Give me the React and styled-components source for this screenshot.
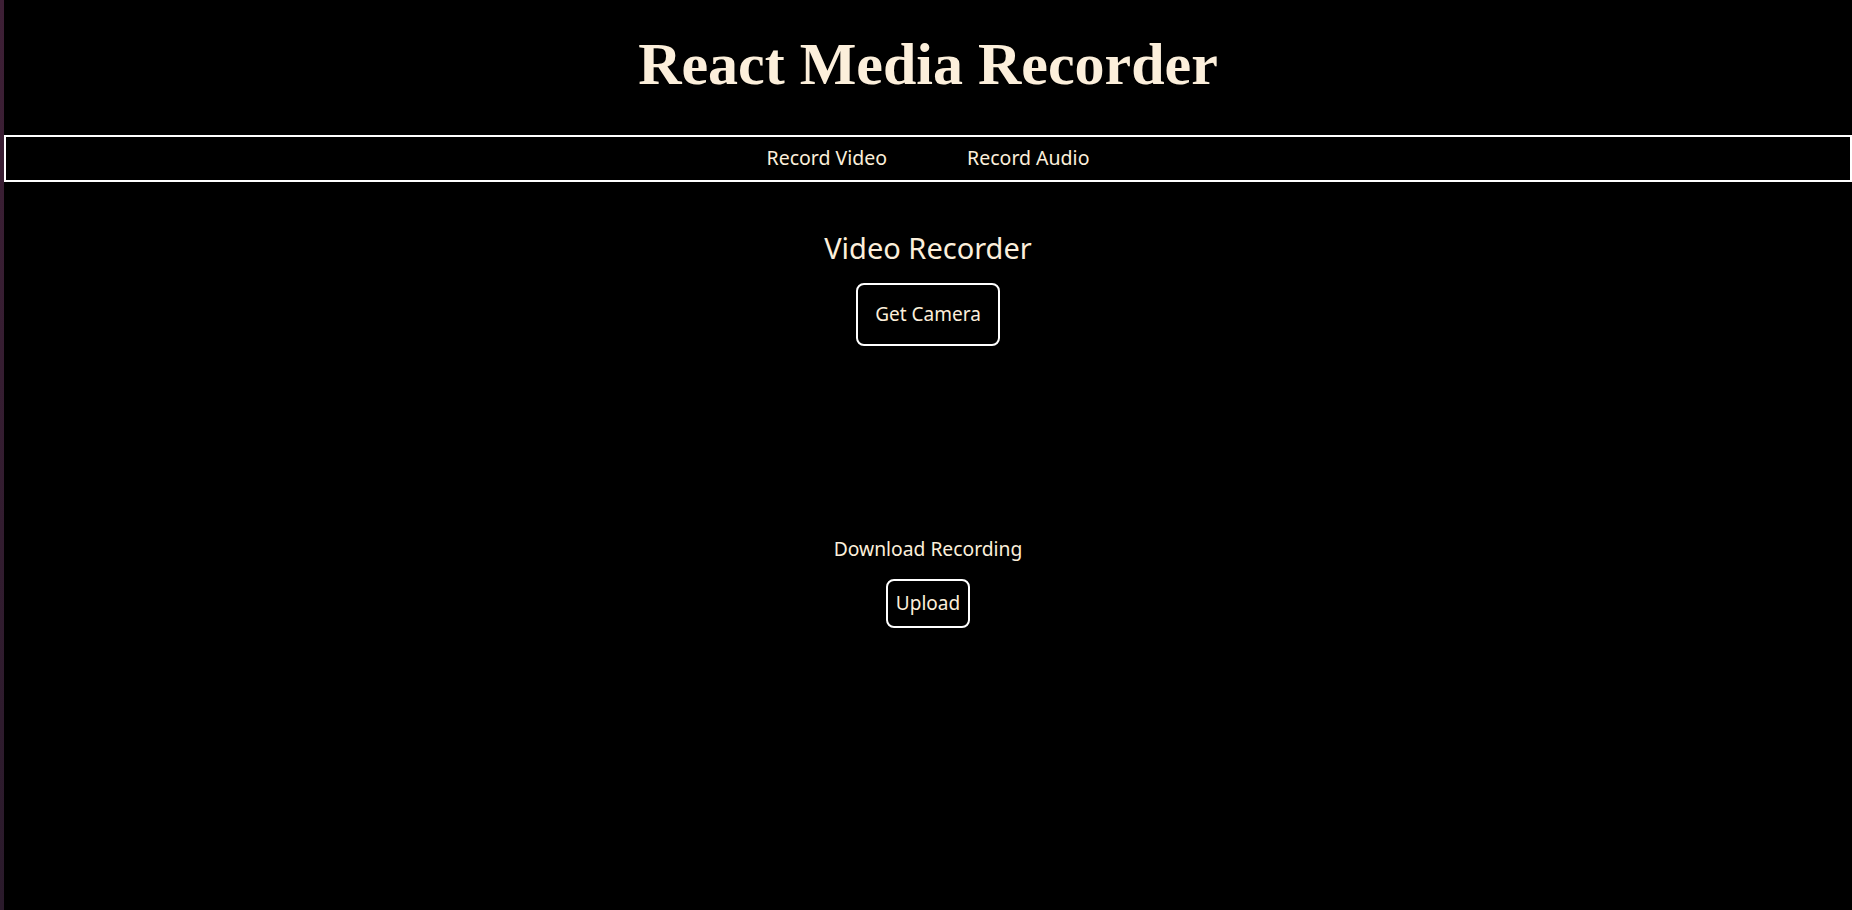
import React from 'react';
import styled, {createGlobalStyle} from 'styled-components';

const cream_color = "#fcefdb";
const white_color = "#ffffff";
const sans_font = "'Noto Sans', 'Open Sans', sans-serif";
const serif_font = "'Liberation Serif', 'Times New Roman', serif";

const GlobalStyle = createGlobalStyle`
  html, body{
    margin: 0;
    padding: 0;
    background-color: #000;
  }
  *{
    box-sizing: border-box;
  }
`;

const Shell = styled.div`
  display: flex;
  min-height: 100vh;
  background-color: #000;
`;

// thin window edge on the left of the screenshot
const Edge = styled.div`
  flex: 0 0 4px;
  background: linear-gradient(#3d1f35, #2a1a2b);
`;

const Main = styled.main`
  flex: 1;
  display: flex;
  flex-direction: column;
  align-items: center;
  color: ${cream_color};
  font-family: ${sans_font};
`;

const Title = styled.h1`
  margin: 0 0 41px;
  padding-top: 34px;
  font-family: ${serif_font};
  font-size: 60px;
  line-height: 60px;
  font-weight: bold;
  color: ${cream_color};
`;

const NavBar = styled.nav`
  align-self: stretch;
  height: 47px;
  padding-bottom: 2px;
  border: 2px solid ${white_color};
  display: flex;
  justify-content: center;
  align-items: center;
  gap: 80px;
`;

const NavLink = styled.a`
  color: ${cream_color};
  text-decoration: none;
  font-size: 19.5px;
  cursor: pointer;
`;

const Heading = styled.h2`
  margin: 48px 0 17px;
  font-size: 29px;
  line-height: 36px;
  font-weight: normal;
`;

const Button = styled.button`
  font-family: ${sans_font};
  color: ${cream_color};
  background-color: #000;
  border: 2px solid ${white_color};
  border-radius: ${props => props.radius || "8px"};
  padding: ${props => props.padding || "10px 16px"};
  font-size: ${props => props.fontSize || "18px"};
  line-height: 1.2;
  cursor: pointer;
`;

// empty video preview before the camera is on
const Preview = styled.div`
  width: 400px;
  height: 191px;
`;

const DownloadLink = styled.a`
  color: ${cream_color};
  text-decoration: none;
  font-size: 19.3px;
  line-height: 24px;
  margin-bottom: 18px;
`;

export default function App() {
  return (
    <Shell>
      <GlobalStyle />
      <Edge />
      <Main>
        <Title>React Media Recorder</Title>
        <NavBar>
          <NavLink>Record Video</NavLink>
          <NavLink>Record Audio</NavLink>
        </NavBar>
        <Heading>Video Recorder</Heading>
        <Button padding="18px 17px" fontSize="19px">Get Camera</Button>
        <Preview />
        <DownloadLink>Download Recording</DownloadLink>
        <Button padding="11px 8px" fontSize="19px">Upload</Button>
      </Main>
    </Shell>
  );
}
